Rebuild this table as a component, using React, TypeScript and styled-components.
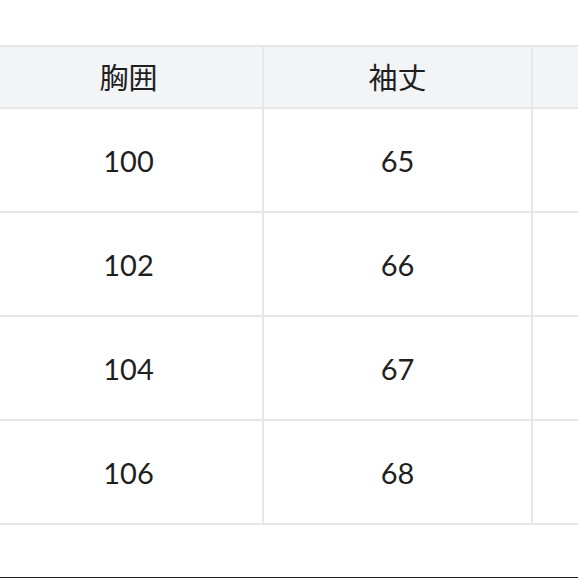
import React from "react";
import styled, { createGlobalStyle } from "styled-components";

const GlobalStyle = createGlobalStyle`
  html, body {
    margin: 0;
    padding: 0;
    background: #ffffff;
    overflow: hidden;
  }
  body {
    font-family: Lato, "Noto Sans CJK JP", "Noto Sans", sans-serif;
    color: #1f1f1f;
  }
`;

const Page = styled.div`
  box-sizing: border-box;
  height: 578px;
  padding-top: 45px;
  border-bottom: 1px solid #1c1c1c;
  overflow: hidden;
`;

const SizeGrid = styled.div`
  display: grid;
  grid-template-columns: repeat(3, 267px);
  grid-template-rows: 60px repeat(4, 102px);
  gap: 2px;
  padding: 2px;
  margin-left: -7px;
  width: max-content;
  background: #e6e7e8;
`;

const Cell = styled.div<{ $head?: boolean }>`
  display: flex;
  align-items: center;
  justify-content: center;
  background: ${(p) => (p.$head ? "#f2f4f6" : "#ffffff")};
  font-size: 29px;
  line-height: 1;
  color: #1f1f1f;
  padding-top: ${(p) => (p.$head ? "1px" : "0")};
`;

const headers = ["胸囲", "袖丈", ""];
const rows = [
  ["100", "65", ""],
  ["102", "66", ""],
  ["104", "67", ""],
  ["106", "68", ""],
];

export default function App() {
  return (
    <>
      <GlobalStyle />
      <Page>
        <SizeGrid>
          {headers.map((h, i) => (
            <Cell $head key={"h" + i}>
              {h}
            </Cell>
          ))}
          {rows.map((r, ri) =>
            r.map((v, ci) => <Cell key={ri + "-" + ci}>{v}</Cell>)
          )}
        </SizeGrid>
      </Page>
    </>
  );
}
